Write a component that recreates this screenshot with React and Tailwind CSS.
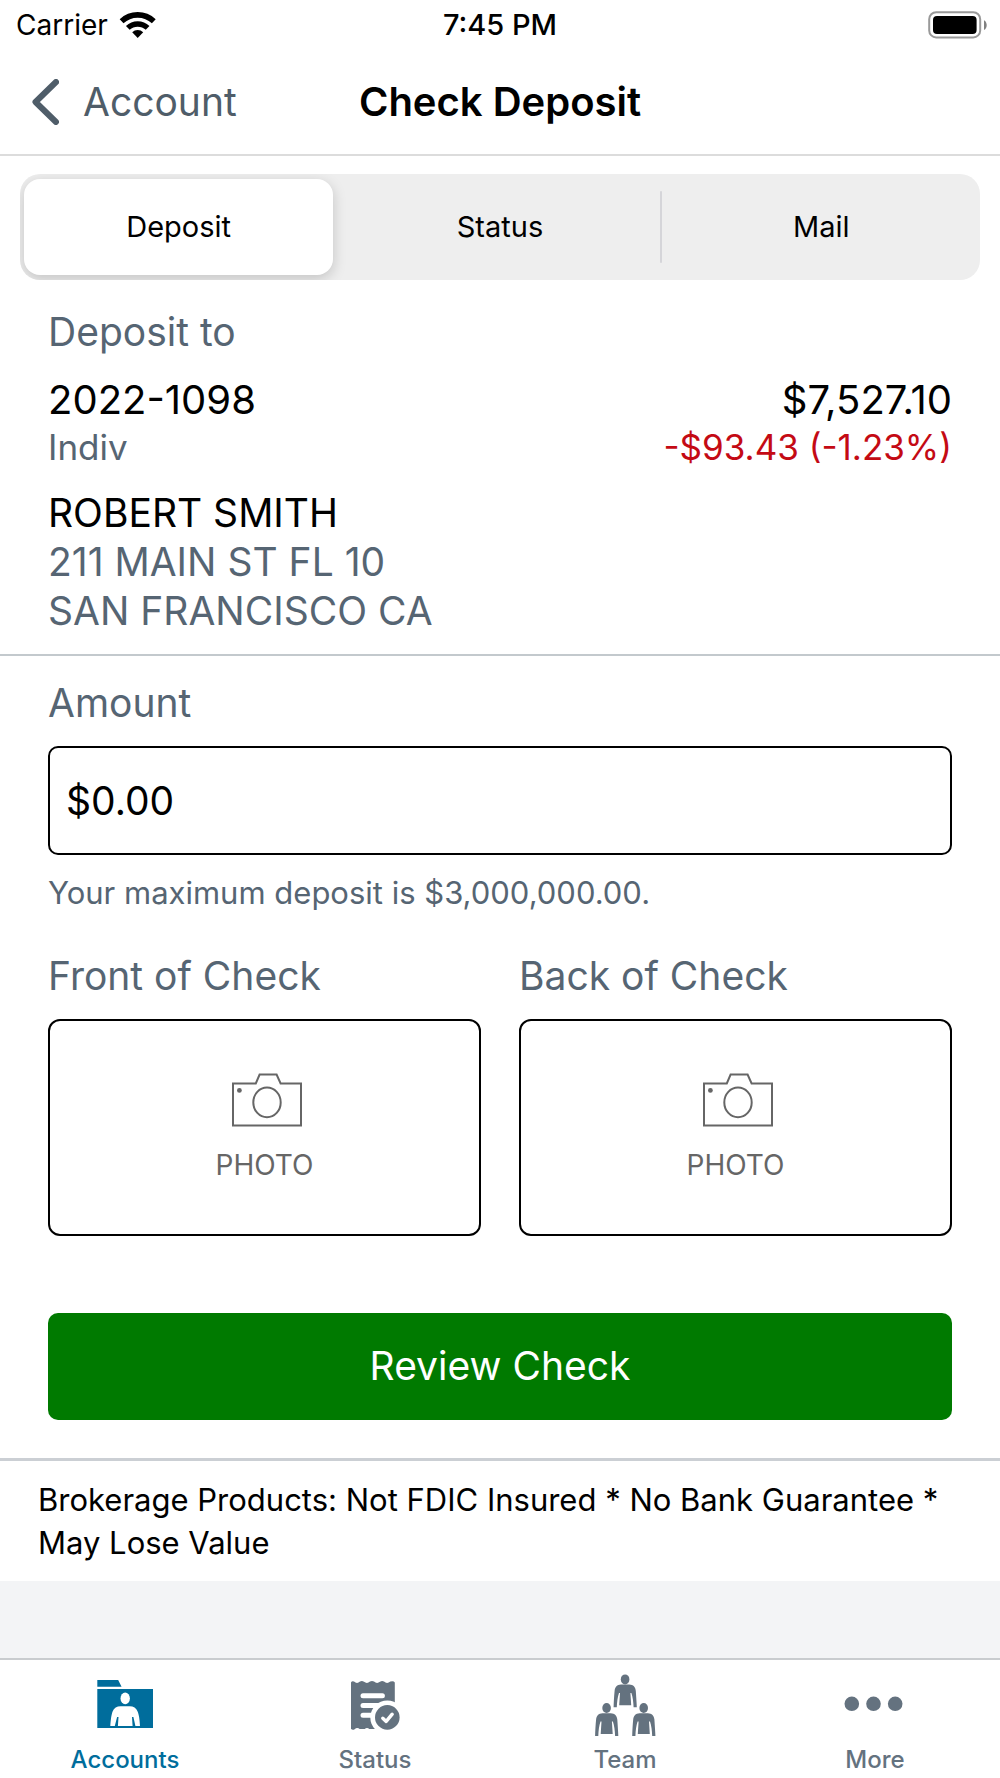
import React, { useState } from "react";

function WifiIcon() {
  return (
    <svg width="38" height="28" viewBox="0 0 38 28" fill="none" stroke="#000" aria-hidden="true">
      <path d="M2.6 10.2 A23.6 23.6 0 0 1 34.8 10.2" strokeWidth="5.6" />
      <path d="M8.8 16.9 A14.4 14.4 0 0 1 28.6 16.9" strokeWidth="5.4" />
      <path d="M13.2 21.3 A8 8 0 0 1 24.2 21.3 L18.7 26.9 Z" fill="#000" stroke="none" />
    </svg>
  );
}

function BatteryIcon() {
  return (
    <svg width="60" height="28" viewBox="0 0 60 28" aria-hidden="true">
      <rect x="1.2" y="1.2" width="51" height="25.2" rx="7" fill="none" stroke="#999" strokeWidth="2" />
      <rect x="5" y="5" width="43.6" height="18" rx="4" fill="#000" />
      <path d="M56 9.2 C59.6 11 59.6 17.2 56 19 Z" fill="#808080" />
    </svg>
  );
}

function CameraIcon() {
  return (
    <svg width="74" height="54" viewBox="0 0 74 54" fill="none" stroke="#666" strokeWidth="2" aria-hidden="true">
      <path d="M5 10.5 H27.8 L31.6 1.5 H48.6 L52.6 10.5 H73 V52.5 H5 Z" />
      <ellipse cx="39" cy="29.4" rx="13.7" ry="14.8" />
      <circle cx="11.4" cy="17.4" r="2.4" fill="#666" stroke="none" />
    </svg>
  );
}

function AccountsIcon() {
  return (
    <svg width="64" height="64" viewBox="0 0 64 64" fill="currentColor" aria-hidden="true">
      <path d="M4.3 8 H25.2 L28.6 14.8 H4.3 Z" />
      <path d="M4.3 17 H60 V56 H4.3 Z" />
      <g fill="#fff">
        <ellipse cx="32.2" cy="26.4" rx="4.7" ry="5.8" />
        <path d="M17.3 54 C17.8 47 18.4 43 19.6 39.6 C20.8 36 24 34.3 27.5 34.3 H36.8 C40.3 34.3 43.4 36 44.6 39.6 C46 43 46.6 47 47 54 H42.4 L40.4 45 H39 L39.6 54 H24.9 L25.5 45 H24.1 L21.8 54 Z" />
      </g>
    </svg>
  );
}

function StatusIcon() {
  return (
    <svg width="64" height="64" viewBox="0 0 64 64" fill="none" aria-hidden="true">
      <path
        fill="currentColor"
        d="M8 10.5 Q9 8.6 11 9.6 Q14 12.2 17 9.6 Q19 8.4 21 9.8 Q24 12.2 27 9.6 Q29 8.4 31 9.6 Q34 12.2 37 9.8 Q39 8.4 41 9.6 Q44 12.2 47.4 9.6 Q50.6 8.6 51.8 10.5 V57 H8 Z"
      />
      <path
        fill="#fff"
        d="M8 59 V57 Q9.5 58.4 11.5 57.4 Q14 54.8 17 57.2 Q19 58.4 21.5 57.2 Q24 54.8 26.5 57.2 Q28.5 58.4 31 57 L36 59 Z"
      />
      <path fill="currentColor" d="M8 56.4 Q9 58.6 11.5 57.4 L12 55 Z" />
      <path stroke="#fff" strokeWidth="5" strokeLinecap="round" d="M20 23.7 H39.4 M20 33.4 H40 M20 43.3 H30" />
      <circle cx="44.3" cy="45.4" r="17" fill="#fff" />
      <circle cx="44.3" cy="45.4" r="12.3" fill="currentColor" />
      <path stroke="#fff" strokeWidth="3.4" strokeLinecap="round" strokeLinejoin="round" d="M39.8 46.2 L43.2 49.4 L49.2 42.2" />
    </svg>
  );
}

function Person({ transform }) {
  return (
    <g transform={transform}>
      <ellipse cx="32.1" cy="7.4" rx="4.3" ry="5" />
      <path d="M20.6 35.3 C20.8 30 21 25 21.6 19 C22 15 24 12.8 28 12.6 H36.2 C40.4 12.8 42.4 15 42.8 19 C43.2 25 43.6 30 43.8 35.3 H40.6 C40.4 30 39.8 25 38.4 21 H37.4 L38.2 33.3 H26.2 L27 21 H26 C24.6 25 24 30 23.8 35.3 Z" />
    </g>
  );
}

function TeamIcon() {
  return (
    <svg width="64" height="64" viewBox="0 0 64 64" fill="currentColor" aria-hidden="true">
      <Person />
      <Person transform="translate(-18.5 28.6)" />
      <Person transform="translate(18.6 28.6)" />
    </svg>
  );
}

function MoreIcon() {
  return (
    <svg width="64" height="64" viewBox="0 0 64 64" fill="currentColor" aria-hidden="true">
      <circle cx="8.8" cy="31.8" r="7.3" />
      <circle cx="30.5" cy="31.8" r="7.3" />
      <circle cx="52.2" cy="31.8" r="7.3" />
    </svg>
  );
}

const segments = ["Deposit", "Status", "Mail"];

function SegmentedControl() {
  const [selected, setSelected] = useState("Deposit");
  return (
    <div role="tablist" className="flex h-[106px] overflow-hidden rounded-[20px] bg-[#eeeeee] px-1 py-[5px]">
      {segments.map((name, i) => {
        const active = name === selected;
        const divided = i > 0 && !active && segments[i - 1] !== selected;
        return (
          <React.Fragment key={name}>
            {i > 0 && (
              <span className="flex w-3 items-center justify-center">
                {divided && <span className="h-[72px] w-[2px] rounded-full bg-[#d5d5d9]" />}
              </span>
            )}
            <button
              type="button"
              role="tab"
              aria-selected={active}
              onClick={() => setSelected(name)}
              className={
                active
                  ? "flex-1 rounded-[16px] bg-white text-[29px] shadow-[0_4px_14px_rgba(0,0,0,0.18)]"
                  : "flex-1 text-[29px]"
              }
            >
              {name}
            </button>
          </React.Fragment>
        );
      })}
    </div>
  );
}

function PhotoPicker({ id, label }) {
  return (
    <div>
      <h2 id={id} className="text-[39px] leading-[48px] text-[#566573]">{label}</h2>
      <button
        type="button"
        aria-labelledby={id}
        className="mt-[19px] flex h-[217px] w-full flex-col items-center justify-center gap-5 rounded-[12px] border-2 border-black text-[#666666]"
      >
        <CameraIcon />
        <span className="text-[28px] leading-9">PHOTO</span>
      </button>
    </div>
  );
}

const tabs = [
  { name: "Accounts", Icon: AccountsIcon },
  { name: "Status", Icon: StatusIcon },
  { name: "Team", Icon: TeamIcon },
  { name: "More", Icon: MoreIcon },
];

export default function App() {
  const [amount, setAmount] = useState("$0.00");
  return (
    <div className="flex min-h-screen flex-col bg-white font-['Inter',sans-serif] text-black">
      <div className="grid h-[50px] grid-cols-[1fr_auto_1fr] items-center px-4 text-[29px]">
        <div className="flex items-center gap-[11px]">
          <span className="text-[28px]">Carrier</span>
          <WifiIcon />
        </div>
        <span className="font-medium">7:45 PM</span>
        <div className="-mr-1 flex justify-end">
          <BatteryIcon />
        </div>
      </div>

      <header className="grid h-[106px] grid-cols-[1fr_auto_1fr] items-center border-b-2 border-[#dcdcdc] px-8">
        <a href="#account" className="flex items-center gap-6 text-[39px] leading-[48px] text-[#4f5d69]">
          <svg width="27" height="46" viewBox="0 0 27 46" fill="none" stroke="currentColor" strokeWidth="6" strokeLinecap="round" strokeLinejoin="round" aria-hidden="true">
            <path d="M24 3 L3.5 23 L24 43" />
          </svg>
          Account
        </a>
        <h1 className="text-[40px] leading-[48px] font-semibold">Check Deposit</h1>
      </header>

      <main>
        <div className="px-5 pt-[18px]">
          <SegmentedControl />
        </div>

        <section className="border-b-2 border-[#c3c9cd] px-12 pt-7 pb-[19px] text-[39px] text-[#566573]">
          <h2 className="leading-[48px]">Deposit to</h2>
          <div className="mt-5 flex justify-between">
            <div>
              <p className="text-[40px] leading-[48px] text-black">2022-1098</p>
              <p className="text-[35px] leading-[46px]">Indiv</p>
            </div>
            <div className="text-right">
              <p className="text-[40px] leading-[48px] text-black">$7,527.10</p>
              <p className="text-[35px] leading-[46px] text-[#c40a14]">-$93.43 (-1.23%)</p>
            </div>
          </div>
          <address className="mt-[18px] leading-[49px] not-italic">
            <span className="block text-black">ROBERT SMITH</span>
            <span className="block">211 MAIN ST FL 10</span>
            <span className="block">SAN FRANCISCO CA</span>
          </address>
        </section>

        <section className="px-12 pt-[23px] pb-[38px]">
          <label htmlFor="amount" className="block text-[39px] leading-[48px] text-[#566573]">Amount</label>
          <input
            id="amount"
            type="text"
            inputMode="decimal"
            value={amount}
            onChange={(e) => setAmount(e.target.value)}
            className="mt-[19px] block h-[109px] w-full rounded-[10px] border-2 border-black bg-white px-4 text-[39px]"
          />
          <p className="mt-4 text-[31px] leading-[44px] text-[#566573]">Your maximum deposit is $3,000,000.00.</p>
          <div className="mt-[37px] grid grid-cols-2 gap-[38px]">
            <PhotoPicker id="front" label="Front of Check" />
            <PhotoPicker id="back" label="Back of Check" />
          </div>
          <button type="button" className="mt-[77px] h-[107px] w-full rounded-[10px] bg-[#007a00] text-[39px] text-white">
            Review Check
          </button>
        </section>
      </main>

      <p className="border-t-[3px] border-[#cbcfd4] px-[38px] py-[17px] text-[31px] leading-[43px]">
        Brokerage Products: Not FDIC Insured * No Bank Guarantee * May Lose Value
      </p>

      <div className="flex-1 bg-[#f3f4f6]" />

      <nav className="grid grid-cols-4 border-t-2 border-[#c9cccf] bg-white pt-3 pb-1">
        {tabs.map(({ name, Icon }, i) => (
          <a
            key={name}
            href={"#" + name.toLowerCase()}
            aria-current={i === 0 ? "page" : undefined}
            className={
              i === 0
                ? "flex flex-col items-center gap-[10px] text-[24px] leading-7 font-medium text-[#006d9c]"
                : "flex flex-col items-center gap-[10px] text-[24px] leading-7 font-medium text-[#64727f]"
            }
          >
            <Icon />
            {name}
          </a>
        ))}
      </nav>
    </div>
  );
}
